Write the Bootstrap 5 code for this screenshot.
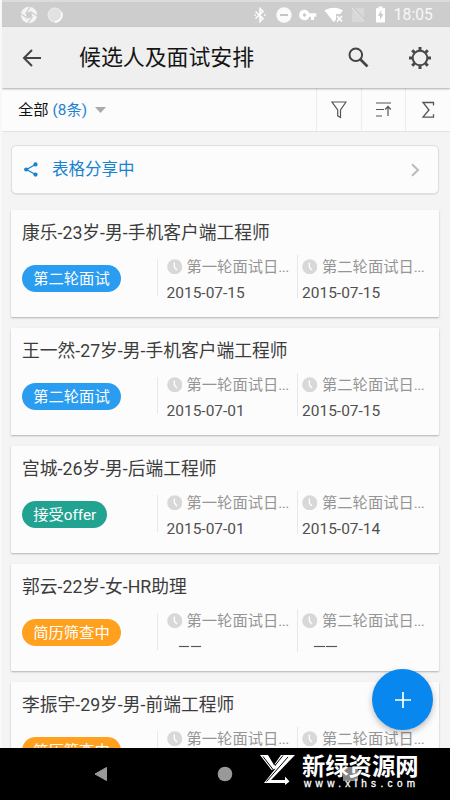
<!DOCTYPE html>
<html lang="zh-CN">
<head>
<meta charset="utf-8">
<meta name="viewport" content="width=device-width, initial-scale=1">
<title>候选人及面试安排</title>
<link href="https://cdn.jsdelivr.net/npm/bootstrap@5.3.0/dist/css/bootstrap.min.css" rel="stylesheet">
<style>
  body { font-family: Roboto, "Noto Sans CJK SC", sans-serif; background: #f4f4f4; height: 800px; overflow: hidden; border-left: 2px solid #f8f8f8; }
  svg { display: block; flex: none; }
  .screen { height: 800px; }
  .statusbar { height: 27px; background: #cdcdcd; border-top: 2px solid #dcdcdc; color: #fff; padding: 0 17px 0 18px; }
  .statusbar .clock-text { font-size: 15.6px; line-height: 24px; letter-spacing: .1px; color: #f8f8f8; margin-left: 8px; }
  .appbar { height: 61px; background: #efefef; padding: 0 17px 0 18px; box-shadow: 0 1px 2px rgba(0,0,0,.32); z-index: 2; }
  .appbar h1 { font-size: 21.9px; font-weight: 400; color: #151515; margin-left: 37px; line-height: 30px; }
  .filterbar { height: 44px; background: #fcfcfc; border-bottom: 1px solid #e2e2e2; font-size: 15.3px; padding-left: 16px; color: #111; }
  .filterbar .label-text { padding-top: 1px; }
  .filterbar .tool { width: 44.6px; border-left: 1px solid #ececec; }
  .filterbar .count { color: #1c82d2; margin-left: 4px; }
  .feed { padding: 13px 11px 0 9px; }
  .share { height: 49px; border: 1px solid #dfdfdf; border-radius: 5px; background: #fcfcfc; padding: 0 18px 0 12px; color: #1682d0; font-size: 16.5px; margin-bottom: 15.5px; box-shadow: 0 1px 1px rgba(0,0,0,.08); }
  .share-text { margin-left: 14px; padding-top: 2px; }
  .candidate { height: 107px; margin-bottom: 11.1px; background: #fcfcfc; padding: 10px 0 0 11px; border-radius: 1px; box-shadow: 0 1px 2px rgba(0,0,0,.27); }
  .candidate h2 { font-size: 17.75px; line-height: 26px; font-weight: 400; color: #3c3c3c; margin: 0; white-space: nowrap; }
  .stage { width: 135px; padding-top: 6px; }
  .pill { display: inline-block; height: 27px; line-height: 29px; border-radius: 14px; padding: 0 11.2px; font-size: 15.3px; color: #fff; }
  .blue { background: #2a9df0; } .green { background: #22a392; } .orange { background: #ffa11f; }
  .info { margin-top: 13px; height: 43px; }
  .field { width: 140px; border-left: 1px solid #e8e8e8; padding-left: 8.5px; height: 37px; }
  .field + .field { width: 142px; padding-left: 4px; height: 43px; margin-top: -4px; padding-top: 4px; }
  .field .caption-line { font-size: 15.3px; line-height: 18px; color: #959595; gap: 4.5px; margin-top: -1px; white-space: nowrap; }
  .field .ellipsis { letter-spacing: -.5px; }
  .field .date { font-size: 15.5px; line-height: 20px; margin-top: 7px; color: #505050; }
  .dashes { display: flex; gap: 1.5px; padding: 16px 0 0 12px; }
  .dashes i { width: 10.5px; height: 1px; background: #555; box-shadow: 0 0 1px #777; }
  .fab { right: 17px; top: 669px; width: 61px; height: 61px; background: #0888ee; box-shadow: 0 3px 6px rgba(0,0,0,.25); z-index: 3; }
  .navkeys { left: 0; right: 0; top: 748px; height: 52px; background: #000; z-index: 4; }
  .brand-mark { left: 260px; top: 6px; color: #fff; }
  .brand-name { font: 700 23.3px/22px "Noto Sans CJK SC", sans-serif; white-space: nowrap; }
  .brand-url { font: 400 10px/11px "Liberation Sans", sans-serif; letter-spacing: 4.35px; padding-left: 2px; margin-top: 2px; -webkit-text-stroke: .3px #fff; }
  .recent-key { left: 343px; top: 19px; width: 15px; height: 14px; background: #858585; }
</style>
<script src="https://cdn.jsdelivr.net/npm/bootstrap@5.3.0/dist/js/bootstrap.bundle.min.js"></script>
</head>
<body>
<svg width="0" height="0" class="position-absolute">
  <symbol id="clock" viewBox="0 0 16 16"><circle cx="8" cy="8" r="7.8" fill="#d8d8d8"/><path d="M7.6 3.7V8.2L10.2 11.3" fill="none" stroke="#fff" stroke-width="1.4"/></symbol>
</svg>
<div class="screen d-flex flex-column overflow-hidden">
  <div class="statusbar d-flex align-items-center flex-shrink-0">
    <svg width="18" height="18" viewBox="0 0 18 18"><circle cx="9" cy="9" r="8.2" fill="#f4f4f4"/><circle cx="9" cy="9" r="2.9" fill="#cdcdcd"/><path d="M10 1 5.5 8M17 10 10 5.5M8 17l4.500-7M1 8l7 4.500" stroke="#cdcdcd" stroke-width="1.300"/></svg>
    <svg width="16" height="16" viewBox="0 0 16 16" style="margin-left:9px"><circle cx="8" cy="8" r="7" fill="#e2e2e2" stroke="#efefef"/><path d="M14.200 5A7 7 0 0 1 8 15" fill="none" stroke="#fff" stroke-width="1.500"/></svg>
    <svg class="ms-auto" width="12" height="16" viewBox="0 0 12 16" fill="none" stroke="#fff" stroke-width="1.500" style="margin-right:2px"><path d="m1.500 4.500 7.500 7L6 14.500v-13l3 3-7.500 7"/><path d="M.3 8h1.500M10 8h1.500" stroke-width="1.500"/></svg>
    <svg width="16" height="16" viewBox="0 0 16 16" style="margin-left:8px"><circle cx="8" cy="8" r="7.700" fill="#fafafa"/><path d="M4 8h8" stroke="#c5c5c5" stroke-width="2"/></svg>
    <svg width="18" height="12" viewBox="0 0 18 12" style="margin-left:7px"><path fill="#fff" fill-rule="evenodd" d="M5.500.8a5.200 5.200 0 1 0 4.800 7H12V11h3V7.800h2.300V4.200h-7A5.200 5.200 0 0 0 5.500.8Zm0 3.400a1.800 1.800 0 1 1 0 3.600 1.800 1.800 0 0 1 0-3.600Z"/></svg>
    <svg width="20" height="16" viewBox="0 0 20 16" style="margin-left:7px"><path fill="#fff" d="M.5 3.600C6.500-.1 13-.1 19 3.600L16.200 7H12v5.400l-2.200 2.800Z"/><path d="m13 9 5 5.500m0-5.500-5 5.500" stroke="#fff" stroke-width="1.600"/></svg>
    <svg width="14" height="16" viewBox="0 0 14 16" style="margin-left:7px"><path d="M2 2 13 15H1V8ZM4 1h9v10Z" fill="#d8d8d8"/><path d="m1 1 12 13" stroke="#e8e8e8"/></svg>
    <svg width="11" height="17" viewBox="0 0 11 17" style="margin-left:10px"><path d="M1 2.200h2.500V.5h4v1.700H10V16.500H1Z" fill="#fff"/><path d="M6.300 4 3 9.800h2.100V14L8.300 8H6.200Z" fill="#c8c8c8"/></svg>
    <span class="clock-text">18:05</span>
  </div>
  <header class="appbar d-flex align-items-center flex-shrink-0 position-relative">
    <svg width="22" height="20" viewBox="0 0 22 20" fill="none" stroke="#444" stroke-width="2"><path d="M21 10H4M12 2 4 10l8 8"/></svg>
    <h1 class="mb-0">候选人及面试安排</h1>
    <svg class="ms-auto" width="22" height="22" viewBox="0 0 22 22" fill="none" stroke="#444"><circle cx="7.800" cy="7.800" r="6.300" stroke-width="2"/><path d="m12.500 12.500 7 7" stroke-width="2.600"/></svg>
    <svg width="26" height="26" viewBox="-13 -13 26 26" fill="none" stroke="#484848" style="margin-left:37px"><circle r="7.300" stroke-width="2"/><g stroke-width="3"><path d="M0-11v3.500M0 11V7.500M-11 0h3.500M11 0H7.500"/><path d="m-7.800-7.800 2.500 2.500m10.600 10.600 2.500 2.500M7.800-7.800 5.300-5.300M-5.300 5.300l-2.500 2.500"/></g></svg>
  </header>
  <div class="filterbar d-flex align-items-center flex-shrink-0">
    <span class="label-text">全部</span><span class="count label-text">(8条)</span>
    <svg width="11" height="6" viewBox="0 0 11 6" style="margin-left:8px"><path d="M0 0h11L5.500 6Z" fill="#aaa"/></svg>
    <div class="tool h-100 d-flex align-items-center justify-content-center ms-auto">
      <svg width="16" height="18" viewBox="0 0 16 18" fill="none" stroke="#555" stroke-width="1.200"><path d="M1 1h14L9.500 9v7.500l-2.800-1.700V9Z"/></svg>
    </div>
    <div class="tool h-100 d-flex align-items-center justify-content-center">
      <svg width="17" height="17" viewBox="0 0 17 17" fill="none" stroke="#555" stroke-width="1.200"><path d="M1 2h15M1 8.500h8M1 15h6M13 15V5.500M10.200 8.500 13 5.500l2.800 3"/></svg>
    </div>
    <div class="tool h-100 d-flex align-items-center justify-content-center">
      <svg width="14" height="18" viewBox="0 0 14 18" fill="none" stroke="#555" stroke-width="1.300"><path d="M12.500 4.500V1.500H2L8 9 2 16.200h10.500v-3"/></svg>
    </div>
  </div>
  <main class="feed">
    <div class="share d-flex align-items-center">
      <svg width="14" height="15" viewBox="0 0 14 15" fill="#1682d0"><path d="M11.500 2.500 2.500 7.500l9 5" fill="none" stroke="#1682d0" stroke-width="1.300"/><circle cx="11.500" cy="2.400" r="2.100"/><circle cx="2.200" cy="7.500" r="2.100"/><circle cx="11.500" cy="12.600" r="2.100"/></svg>
      <span class="share-text">表格分享中</span>
      <svg class="ms-auto" width="10" height="14" viewBox="0 0 10 14" fill="none" stroke="#bbb" stroke-width="2"><path d="m2 1.200 6 5.800-6 5.800"/></svg>
    </div>
    <div id="candidates"></div>
  </main>
</div>
<button class="fab btn rounded-circle border-0 p-0 position-absolute d-flex align-items-center justify-content-center" aria-label="添加">
  <svg width="16" height="16" viewBox="0 0 16 16" stroke="#fff" stroke-width="1.700"><path d="M8 0v16M0 8h16"/></svg>
</button>
<footer class="navkeys position-absolute">
  <svg class="position-absolute" style="left:94px;top:18px" width="13" height="16" viewBox="0 0 13 16"><path d="M12.500 1.500v13L1 8Z" fill="#999" stroke="#999" stroke-linejoin="round"/></svg>
  <svg class="position-absolute" style="left:217px;top:18px" width="16" height="16"><circle cx="8" cy="8" r="7.300" fill="#999"/></svg>
  <div class="recent-key position-absolute"></div>
  <div class="brand-mark position-absolute d-flex">
    <svg width="35" height="32" viewBox="0 0 35 32"><path d="M0 1H8L14 11 21 1H35L11 26H25V22.500L29.500 27.500 25 31V29H4L15.500 14.500 11.500 16Z" fill="#fff"/><path d="M3 2.500 13 15.500M9 1l6.500 10.500M28 3 6.500 27.500M23 1.500l-8 10" fill="none" stroke="#000" stroke-width="1"/></svg>
    <div style="margin-left:7px">
      <div class="brand-name">新绿资源网</div>
      <div class="brand-url">www.xlhs.com</div>
    </div>
  </div>
</footer>
<script>
  const people = [
    ["康乐-23岁-男-手机客户端工程师", "第二轮面试", "blue", "2015-07-15", "2015-07-15"],
    ["王一然-27岁-男-手机客户端工程师", "第二轮面试", "blue", "2015-07-01", "2015-07-15"],
    ["宫城-26岁-男-后端工程师", "接受offer", "green", "2015-07-01", "2015-07-14"],
    ["郭云-22岁-女-HR助理", "简历筛查中", "orange", "", ""],
    ["李振宇-29岁-男-前端工程师", "简历筛查中", "orange", "", ""]
  ];
  const field = (label, date) => `<div class="field"><div class="caption-line d-flex align-items-center"><svg width="15.500" height="15.500"><use href="#clock"/></svg><span>${label}<span class="ellipsis">...</span></span></div>${date ? `<div class="date">${date}</div>` : '<div class="dashes"><i></i><i></i></div>'}</div>`;
  document.getElementById("candidates").innerHTML = people.map(([name, stage, tone, first, second]) =>
    `<section class="candidate"><h2>${name}</h2><div class="info d-flex"><div class="stage"><span class="pill ${tone}">${stage}</span></div>${field("第一轮面试日", first)}${field("第二轮面试日", second)}</div></section>`).join("");
</script>
</body>
</html>
